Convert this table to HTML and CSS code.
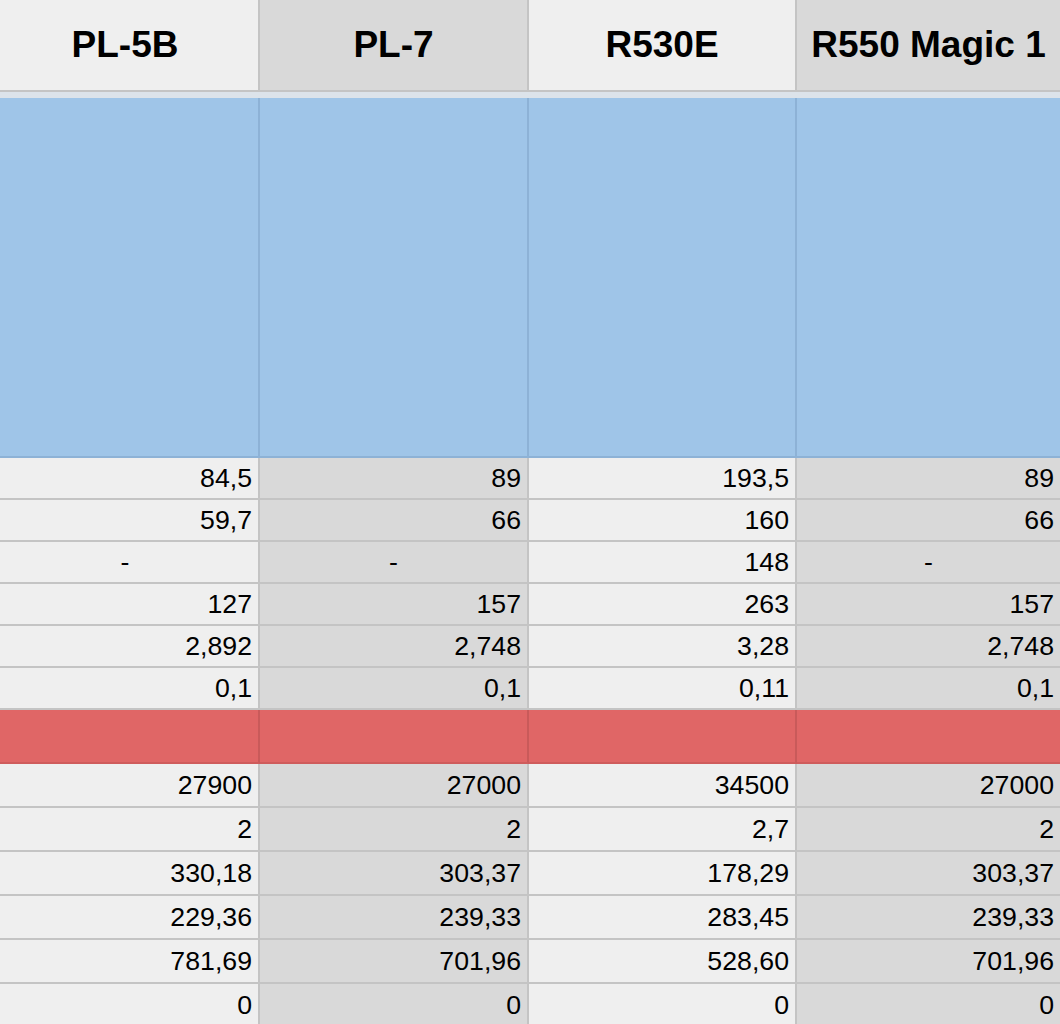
FILE: index.html
```html
<!DOCTYPE html>
<html>
<head>
<meta charset="utf-8">
<link rel="stylesheet" href="styles.css">
</head>
<body>
<div class="sheet">
  <div class="row head">
    <div class="cell light first">PL-5B</div>
    <div class="cell dark">PL-7</div>
    <div class="cell light">R530E</div>
    <div class="cell dark">R550 Magic 1</div>
  </div>
  <div class="strip"></div>
  <div class="row band blue">
    <div class="cell"></div><div class="cell"></div><div class="cell"></div><div class="cell"></div>
  </div>
  <div class="row data">
    <div class="cell light">84,5</div><div class="cell dark">89</div><div class="cell light">193,5</div><div class="cell dark">89</div>
  </div>
  <div class="row data">
    <div class="cell light">59,7</div><div class="cell dark">66</div><div class="cell light">160</div><div class="cell dark">66</div>
  </div>
  <div class="row data">
    <div class="cell light center first">-</div><div class="cell dark center">-</div><div class="cell light">148</div><div class="cell dark center">-</div>
  </div>
  <div class="row data">
    <div class="cell light">127</div><div class="cell dark">157</div><div class="cell light">263</div><div class="cell dark">157</div>
  </div>
  <div class="row data">
    <div class="cell light">2,892</div><div class="cell dark">2,748</div><div class="cell light">3,28</div><div class="cell dark">2,748</div>
  </div>
  <div class="row data">
    <div class="cell light">0,1</div><div class="cell dark">0,1</div><div class="cell light">0,11</div><div class="cell dark">0,1</div>
  </div>
  <div class="row band red">
    <div class="cell"></div><div class="cell"></div><div class="cell"></div><div class="cell"></div>
  </div>
  <div class="row data tall">
    <div class="cell light">27900</div><div class="cell dark">27000</div><div class="cell light">34500</div><div class="cell dark">27000</div>
  </div>
  <div class="row data tall">
    <div class="cell light">2</div><div class="cell dark">2</div><div class="cell light">2,7</div><div class="cell dark">2</div>
  </div>
  <div class="row data tall">
    <div class="cell light">330,18</div><div class="cell dark">303,37</div><div class="cell light">178,29</div><div class="cell dark">303,37</div>
  </div>
  <div class="row data tall">
    <div class="cell light">229,36</div><div class="cell dark">239,33</div><div class="cell light">283,45</div><div class="cell dark">239,33</div>
  </div>
  <div class="row data tall">
    <div class="cell light">781,69</div><div class="cell dark">701,96</div><div class="cell light">528,60</div><div class="cell dark">701,96</div>
  </div>
  <div class="row data tall">
    <div class="cell light">0</div><div class="cell dark">0</div><div class="cell light">0</div><div class="cell dark">0</div>
  </div>
</div>
</body>
</html>
```

FILE: styles.css
```css
html, body {
  margin: 0;
  padding: 0;
  background: #efefef;
}

.sheet {
  width: 1060px;
  font-family: "Liberation Sans", Arial, sans-serif;
  color: #000;
}

.row {
  display: grid;
  grid-template-columns: 260px 269px 268px 263px;
}

.cell {
  box-sizing: border-box;
  border-right: 2px solid #c4c4c4;
  border-bottom: 2px solid #c4c4c4;
  display: flex;
  align-items: center;
}

.cell:last-child {
  border-right: none;
}

.light { background: #efefef; }
.dark { background: #d9d9d9; }

.head .cell {
  height: 92px;
  justify-content: center;
  font-weight: bold;
  font-size: 37px;
  padding-bottom: 1px;
}

.head .cell.first {
  padding-right: 8px;
}

.strip {
  height: 6px;
  background: #dce3ea;
}

.band.blue .cell {
  height: 360px;
  background: #9fc5e8;
  border-right-color: #8db2d6;
  border-bottom-color: #8db2d6;
}

.band.red .cell {
  height: 54px;
  background: #e06666;
  border-right-color: #c95a5a;
  border-bottom-color: #cf5c5c;
}

.data .cell {
  height: 42px;
  justify-content: flex-end;
  padding-right: 6px;
  font-size: 26.7px;
}

.data.tall .cell {
  height: 44px;
}

.data .cell.center {
  justify-content: center;
  padding-right: 0;
}

.data .cell.center.first {
  padding-right: 8px;
}
```
